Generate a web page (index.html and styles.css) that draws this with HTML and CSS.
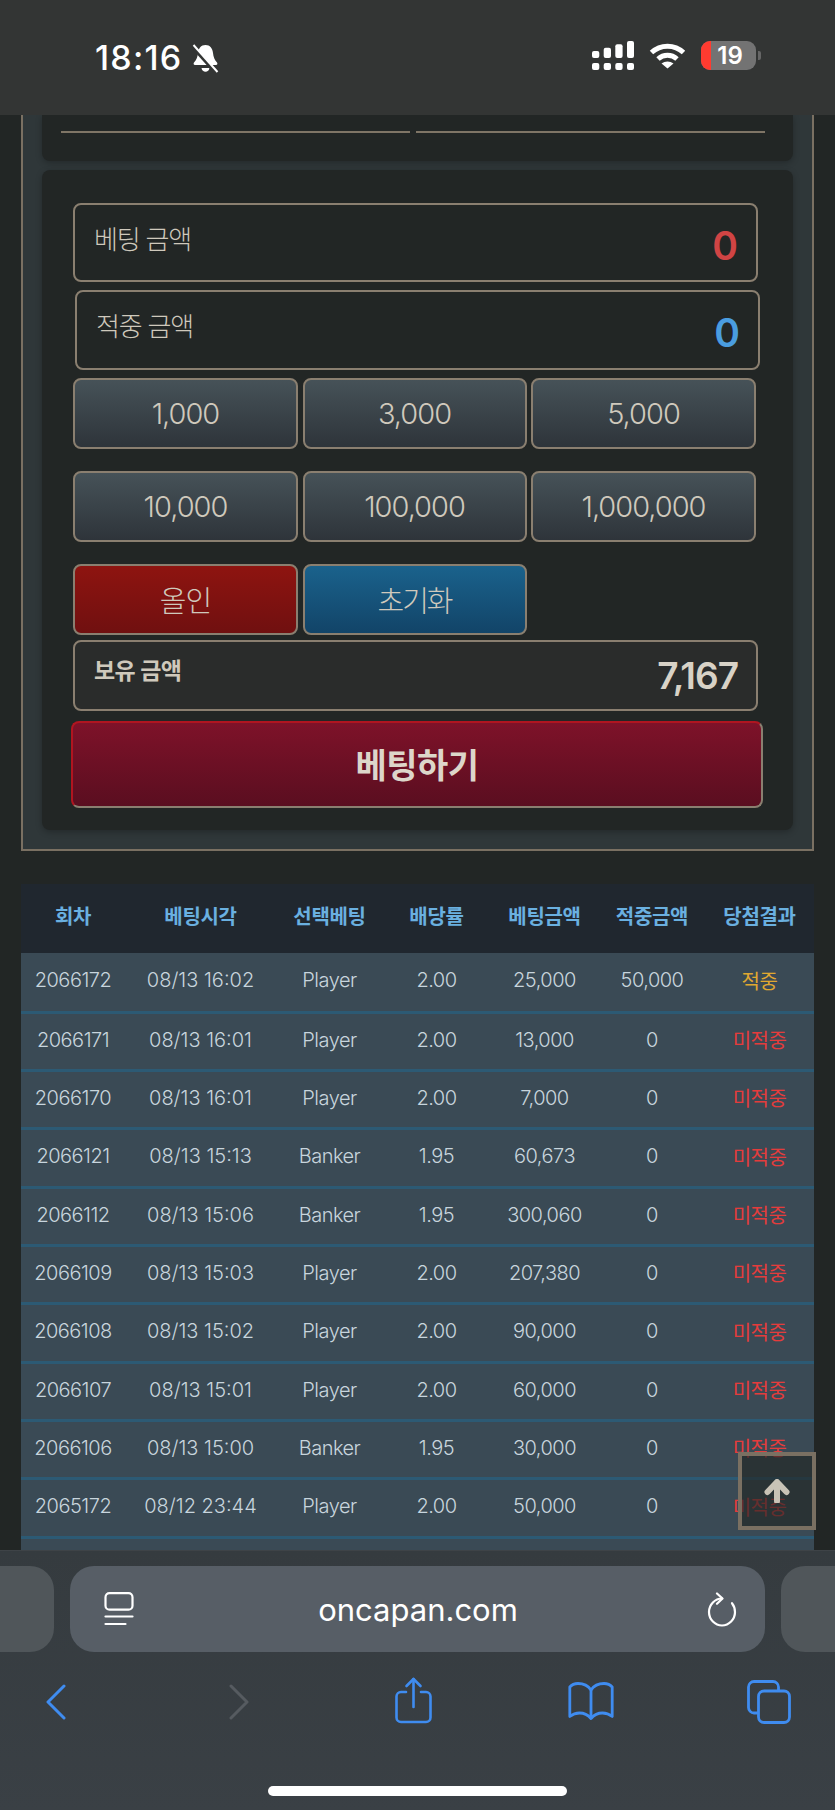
FILE: index.html
```html
<!DOCTYPE html>
<html lang="ko">
<head>
    <meta charset="UTF-8">
    <meta name="viewport" content="width=device-width, initial-scale=1.0">
    <title>oncapan.com</title>
    <link rel="stylesheet" href="styles.css">
</head>
<body>
    <header class="status-bar">
        <div class="status-left">
            <span class="clock">18:16</span>
            <svg class="bell" width="27" height="29" viewBox="0 0 27 29">
                <path d="M13.500 1c4.600 0 7 3.400 7.500 8 .4 4 1.500 7 4 9.500.8 1 .3 2.500-1 2.500H3c-1.300 0-1.800-1.500-1-2.500 2.500-2.500 3.600-5.500 4-9.500.5-4.600 2.900-8 7.500-8z" fill="#fff"/>
                <path d="M9.500 24h8c-.4 2.500-2 3.800-4 3.800s-3.600-1.300-4-3.800z" fill="#fff"/>
                <path d="M1.500 3.500 24 28.500" stroke="#333534" stroke-width="4"/>
                <path d="M1.500 1 25.500 28" stroke="#fff" stroke-width="2"/>
            </svg>
        </div>
        <div class="status-right">
            <svg width="42" height="29" viewBox="0 0 42 29" fill="#fff">
                <rect x="0" y="10" width="7.300" height="7" rx="2"/>
                <rect x="11.700" y="6.700" width="7.300" height="10.300" rx="2"/>
                <rect x="23.300" y="3.300" width="7.300" height="13.700" rx="2"/>
                <rect x="35" y="0" width="7" height="17" rx="2"/>
                <rect x="0" y="22" width="7.300" height="7" rx="2"/>
                <rect x="11.700" y="22" width="7.300" height="7" rx="2"/>
                <rect x="23.300" y="22" width="7.300" height="7" rx="2"/>
                <rect x="35" y="22" width="7" height="7" rx="2"/>
            </svg>
            <svg width="37" height="27" viewBox="0 0 37 27" fill="none" stroke="#fff" stroke-width="5">
                <path d="M2.500 10.500C11.500 2 25.500 2 34.500 10.500"/>
                <path d="M9 17c5.500-5 13.500-5 19 0"/>
                <path d="M18.500 26.500 12.500 21.500c3.500-2.800 8.500-2.800 12 0z" fill="#fff" stroke="none"/>
            </svg>
            <div class="battery">
                <div class="battery-body"><span class="battery-low"></span><span class="battery-num">19</span></div>
                <span class="battery-nub"></span>
            </div>
        </div>
    </header>

    <main class="page">
        <section class="panel">
            <div class="card card-top">
                <div class="line-row"><span class="line"></span><span class="line"></span></div>
            </div>
            <div class="card card-bet">
                <div class="field">
                    <span class="field-label">베팅 금액</span>
                    <span class="field-value red">0</span>
                </div>
                <div class="field field-shift">
                    <span class="field-label">적중 금액</span>
                    <span class="field-value blue">0</span>
                </div>
                <div class="amounts">
                    <button class="amt">1,000</button>
                    <button class="amt">3,000</button>
                    <button class="amt">5,000</button>
                    <button class="amt">10,000</button>
                    <button class="amt">100,000</button>
                    <button class="amt">1,000,000</button>
                    <button class="amt amt-red">올인</button>
                    <button class="amt amt-blue">초기화</button>
                </div>
                <div class="field field-hold">
                    <span class="field-label">보유 금액</span>
                    <span class="field-value">7,167</span>
                </div>
                <button class="bet-btn">베팅하기</button>
            </div>
        </section>

        <table class="history">
            <colgroup>
                <col class="c1"><col class="c2"><col class="c3"><col class="c4"><col class="c5"><col class="c6"><col class="c7">
            </colgroup>
            <thead>
                <tr><th>회차</th><th>베팅시각</th><th>선택베팅</th><th>배당률</th><th>베팅금액</th><th>적중금액</th><th>당첨결과</th></tr>
            </thead>
            <tbody>
                <tr><td>2066172</td><td>08/13 16:02</td><td>Player</td><td>2.00</td><td>25,000</td><td>50,000</td><td class="hit">적중</td></tr>
                <tr><td>2066171</td><td>08/13 16:01</td><td>Player</td><td>2.00</td><td>13,000</td><td>0</td><td class="miss">미적중</td></tr>
                <tr><td>2066170</td><td>08/13 16:01</td><td>Player</td><td>2.00</td><td>7,000</td><td>0</td><td class="miss">미적중</td></tr>
                <tr><td>2066121</td><td>08/13 15:13</td><td>Banker</td><td>1.95</td><td>60,673</td><td>0</td><td class="miss">미적중</td></tr>
                <tr><td>2066112</td><td>08/13 15:06</td><td>Banker</td><td>1.95</td><td>300,060</td><td>0</td><td class="miss">미적중</td></tr>
                <tr><td>2066109</td><td>08/13 15:03</td><td>Player</td><td>2.00</td><td>207,380</td><td>0</td><td class="miss">미적중</td></tr>
                <tr><td>2066108</td><td>08/13 15:02</td><td>Player</td><td>2.00</td><td>90,000</td><td>0</td><td class="miss">미적중</td></tr>
                <tr><td>2066107</td><td>08/13 15:01</td><td>Player</td><td>2.00</td><td>60,000</td><td>0</td><td class="miss">미적중</td></tr>
                <tr><td>2066106</td><td>08/13 15:00</td><td>Banker</td><td>1.95</td><td>30,000</td><td>0</td><td class="miss">미적중</td></tr>
                <tr><td>2065172</td><td>08/12 23:44</td><td>Player</td><td>2.00</td><td>50,000</td><td>0</td><td class="miss">미적중</td></tr>
                <tr><td colspan="7"></td></tr>
            </tbody>
        </table>

        <a class="to-top">
            <svg width="26" height="24" viewBox="0 0 26 24" fill="none" stroke="#c9c3b6" stroke-linecap="round" stroke-linejoin="round">
                <path d="M3.500 13 13 3l9.500 10" stroke-width="6"/>
                <path d="M13 4v18" stroke-width="6"/>
            </svg>
        </a>
    </main>

    <footer class="safari">
        <div class="tabs-row">
            <div class="tab-side tab-left"></div>
            <div class="url-bar">
                <svg width="30" height="34" viewBox="0 0 30 34" fill="none" stroke="#fff" stroke-width="2.200" stroke-linecap="round">
                    <rect x="1.500" y="1.200" width="27" height="16.500" rx="4"/>
                    <path d="M1.500 24.500h27"/>
                    <path d="M1.500 32h20"/>
                </svg>
                <span class="url-text">oncapan.com</span>
                <svg width="30" height="35" viewBox="0 0 30 35" fill="none" stroke="#fff" stroke-width="2.200" stroke-linecap="round" stroke-linejoin="round">
                    <path d="M15 6.500C8 6.500 2 12.500 2 20s6 13.500 13 13.500S28 27.500 28 20c0-3.500-1.200-6.500-3-8.800"/>
                    <path d="M10 1.500 15.500 6.500 10 11.800"/>
                </svg>
            </div>
            <div class="tab-side tab-right"></div>
        </div>
        <nav class="tool-row">
            <svg class="tool-back" width="20" height="36" viewBox="0 0 20 36" fill="none" stroke="#3f8cf0" stroke-width="3" stroke-linecap="round" stroke-linejoin="round">
                <path d="M18 2 2 18l16 16"/>
            </svg>
            <svg class="tool-fwd" width="20" height="36" viewBox="0 0 20 36" fill="none" stroke="#565b60" stroke-width="3" stroke-linecap="round" stroke-linejoin="round">
                <path d="M2 2l16 16L2 34"/>
            </svg>
            <svg class="tool-share" width="37" height="47" viewBox="0 0 37 47" fill="none" stroke="#3f8cf0" stroke-width="2.600" stroke-linecap="round" stroke-linejoin="round">
                <path d="M11 15H6c-2.500 0-4.500 2-4.500 4.500v21c0 2.500 2 4.500 4.500 4.500h25c2.500 0 4.500-2 4.500-4.500v-21c0-2.500-2-4.500-4.500-4.500h-5"/>
                <path d="M18.500 30V2"/>
                <path d="M11.500 9l7-7 7 7"/>
            </svg>
            <svg class="tool-book" width="46" height="38" viewBox="0 0 46 38" fill="none" stroke="#3f8cf0" stroke-width="2.800" stroke-linecap="round" stroke-linejoin="round">
                <path d="M23 8C20 3.500 15.500 1.500 10 1.500 6 1.500 3.500 3 1.800 5v29.500C5 32 8 31 11.500 31c5 0 8.500 2 11.500 5.500 3-3.500 6.500-5.500 11.500-5.500 3.500 0 6.500 1 9.700 3.500V5C42.500 3 40 1.500 36 1.500 30.500 1.500 26 3.500 23 8z"/>
                <path d="M23 8v28"/>
            </svg>
            <svg class="tool-tabs" width="44" height="44" viewBox="0 0 44 44" fill="none" stroke="#3f8cf0" stroke-width="2.800">
                <path d="M11 33H7c-3 0-5.500-2.500-5.500-5.500V7c0-3 2.500-5.500 5.500-5.500h19c3 0 5.500 2.500 5.500 5.500v4"/>
                <rect x="11.500" y="11" width="31" height="31.500" rx="5.500"/>
            </svg>
        </nav>
        <div class="home-bar"></div>
    </footer>
</body>
</html>
```

FILE: styles.css
```css
* {
    box-sizing: border-box;
}
html, body {
    margin: 0;
    padding: 0;
}
body {
    width: 835px;
    height: 1810px;
    display: flex;
    flex-direction: column;
    overflow: hidden;
    background-color: #222625;
    font-family: "Inter", "Noto Sans CJK KR", sans-serif;
    color: #cfc9bc;
}

/* status bar */
.status-bar {
    height: 115px;
    flex: none;
    background-color: #333534;
    display: flex;
    justify-content: space-between;
    align-items: flex-start;
    padding: 41px 74px 0 95px;
}
.status-left {
    display: flex;
    align-items: center;
    gap: 10px;
    color: #fff;
}
.clock {
    font-size: 34px;
    font-weight: 500;
    line-height: 34px;
    letter-spacing: 1.200px;
}
.status-right {
    display: flex;
    align-items: center;
    gap: 15px;
}
.battery {
    display: flex;
    align-items: center;
    gap: 2px;
}
.battery-body {
    width: 55px;
    height: 29px;
    border-radius: 9px;
    background-color: #737373;
    overflow: hidden;
    display: flex;
    align-items: center;
}
.battery-low {
    width: 10px;
    height: 100%;
    background-color: #ff3b30;
}
.battery-num {
    flex: 1;
    text-align: center;
    color: #fff;
    font-size: 24px;
    font-weight: 600;
    line-height: 29px;
    padding-right: 7px;
}
.battery-nub {
    width: 3px;
    height: 9px;
    background-color: #666;
    border-radius: 0 2px 2px 0;
}

/* page content */
.page {
    position: relative;
    flex: 1;
    overflow: hidden;
    padding: 0 21px;
}
.panel {
    height: 736px;
    background-color: #2f3739;
    border: 2px solid #7a7062;
    border-top: none;
    padding: 0 19px;
}
.card {
    background-color: #222625;
    border-radius: 8px;
    box-shadow: 0 2px 6px rgba(0, 0, 0, 0.25);
}
.card-top {
    height: 46px;
    margin-bottom: 9px;
    border-radius: 0 0 8px 8px;
    padding: 16px 28px 0 19px;
}
.line-row {
    display: flex;
    gap: 6px;
}
.line {
    flex: 1;
    height: 2px;
    background-color: #7f7566;
}
.card-bet {
    height: 660px;
    padding: 33px 35px 0 31px;
}
.field {
    height: 79px;
    border: 2px solid #8a7f70;
    border-radius: 8px;
    margin-bottom: 8px;
    padding: 19px 18px 0 19px;
    display: flex;
    justify-content: space-between;
}
.field-shift {
    height: 80px;
    margin-left: 2px;
    margin-right: -2px;
}
.field-label {
    font-size: 26px;
    font-weight: 300;
    line-height: 32px;
    letter-spacing: -1.200px;
}
.field-value {
    font-size: 39px;
    font-weight: 600;
    line-height: 46px;
    margin-top: -1px;
}
.red {
    color: #d04444;
}
.blue {
    color: #4a9de0;
}
.amounts {
    display: grid;
    grid-template-columns: 225px 224px 225px;
    grid-auto-rows: 71px;
    column-gap: 4.500px;
    row-gap: 22px;
    margin-bottom: 5px;
    width: 684px;
}
.amt {
    border: 2px solid #8a7f70;
    border-radius: 8px;
    background: linear-gradient(#465258, #2e343a);
    color: #cfc9bc;
    font-family: inherit;
    font-size: 29px;
    font-weight: 300;
    letter-spacing: -1px;
    padding: 0;
}
.amt-red {
    background: linear-gradient(#8e1410, #701010);
    padding-bottom: 2px;
}
.amt-blue {
    background: linear-gradient(#1a628c, #124468);
    letter-spacing: -2px;
    padding-bottom: 2px;
}
.field-hold {
    height: 71px;
    margin-bottom: 10px;
    background-color: #2a2c2b;
    padding-top: 12px;
}
.field-hold .field-label {
    font-size: 23px;
    font-weight: 600;
    line-height: 34px;
    letter-spacing: -0.600px;
}
.field-hold .field-value {
    font-size: 37px;
    font-weight: 600;
    line-height: 46px;
    letter-spacing: -1px;
    color: #d8d2c6;
}
.bet-btn {
    display: block;
    width: 692px;
    height: 87px;
    margin-left: -2px;
    border: 2px solid #8a7f70;
    border-top-color: #b01520;
    border-left-color: #b01520;
    border-radius: 8px;
    background: linear-gradient(#7e1229, #5a0e20);
    color: #ddd6ca;
    font-family: inherit;
    font-size: 34px;
    font-weight: 600;
    letter-spacing: -0.500px;
    padding: 0 0 2px;
}

/* history table */
.history {
    width: 793px;
    margin-top: 33px;
    border-collapse: separate;
    border-spacing: 0;
    table-layout: fixed;
    text-align: center;
}
.c1 { width: 104px; }
.c2 { width: 151px; }
.c3 { width: 107px; }
.c4 { width: 107px; }
.c5 { width: 109px; }
.c6 { width: 106px; }
.c7 { width: 109px; }
.history thead tr {
    height: 69px;
    background-color: #20272f;
}
.history th {
    padding: 0 0 6px;
    color: #6ab0e0;
    font-size: 20px;
    font-weight: 600;
    letter-spacing: -0.300px;
    white-space: nowrap;
}
.history tbody tr {
    height: 58px;
    background-color: #3a4a55;
}
.history tbody tr:nth-child(3n+1) {
    height: 59px;
}
.history tbody tr:first-child {
    height: 61px;
}
.history td {
    padding: 0 0 4px;
    border-bottom: 3px solid #2c5a74;
    color: #c8d5dd;
    font-size: 20px;
    font-weight: 300;
    letter-spacing: -0.500px;
    white-space: nowrap;
}
.history td:nth-child(2) {
    letter-spacing: 0;
}
.history td.hit {
    color: #e0a830;
    font-weight: 400;
}
.history td.miss {
    color: #e43c3c;
    font-weight: 400;
}
.to-top {
    position: absolute;
    left: 738px;
    top: 1337px;
    width: 78px;
    height: 78px;
    border: 4px solid #7a7062;
    background-color: rgba(34, 38, 37, 0.65);
    display: flex;
    align-items: center;
    justify-content: center;
}

/* safari toolbar */
.safari {
    height: 260px;
    flex: none;
    background: linear-gradient(#353b3f, #3a4045);
    border-top: 1px solid #3e4347;
    padding-top: 15px;
    position: relative;
}
.tabs-row {
    display: flex;
    gap: 16px;
    height: 86px;
}
.tab-side {
    width: 54px;
    background-color: #50565a;
}
.tab-left {
    border-radius: 0 24px 24px 0;
}
.tab-right {
    border-radius: 24px 0 0 24px;
}
.url-bar {
    flex: 1;
    background-color: #575e66;
    border-radius: 24px;
    display: flex;
    align-items: center;
    justify-content: space-between;
    padding: 0 28px 0 34px;
}
.url-text {
    color: #fff;
    font-size: 31px;
    font-weight: 400;
    margin-right: 5px;
}
.tool-row {
    display: flex;
    align-items: flex-start;
    padding: 25px 0 0 46px;
}
.tool-back { margin-top: 7px; }
.tool-fwd { margin: 7px 0 0 163px; }
.tool-share { margin-left: 146px; }
.tool-book { margin: 5px 0 0 136px; }
.tool-tabs { margin: 3px 0 0 133px; }
.home-bar {
    position: absolute;
    left: 268px;
    top: 235px;
    width: 299px;
    height: 10px;
    border-radius: 5px;
    background-color: #fff;
}
```
